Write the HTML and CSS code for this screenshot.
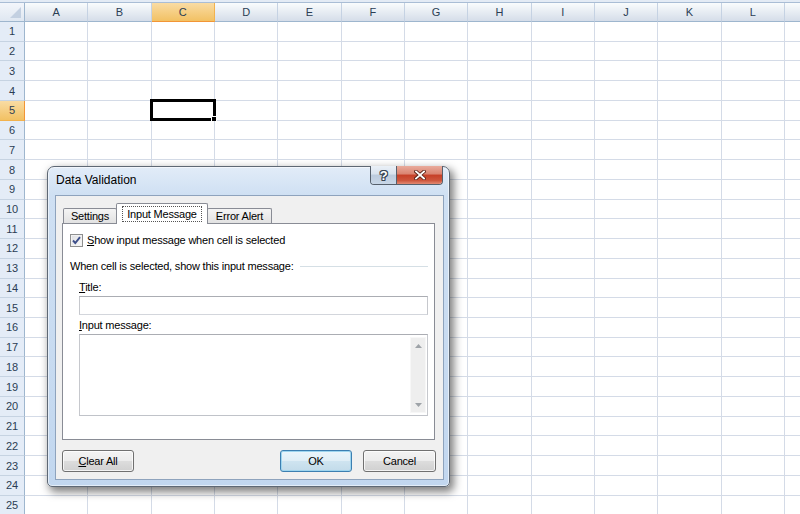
FILE: index.html
```html
<!DOCTYPE html>
<html>
<head>
<meta charset="utf-8">
<title>Data Validation</title>
<link rel="stylesheet" href="styles.css">
</head>
<body>
<div class="sheet">
  <div class="hdr">
    <div class="corner"><svg width="11" height="11" viewBox="0 0 11 11"><polygon points="11,0 11,11 0,11" fill="#c3d0e1"/></svg></div>
    <div class="ch">A</div><div class="ch">B</div><div class="ch sel">C</div><div class="ch">D</div><div class="ch">E</div><div class="ch">F</div><div class="ch">G</div><div class="ch">H</div><div class="ch">I</div><div class="ch">J</div><div class="ch">K</div><div class="ch">L</div><div class="ch"></div>
  </div>
  <div class="row"><div class="rh">1</div><div class="cells"></div></div>
  <div class="row"><div class="rh">2</div><div class="cells"></div></div>
  <div class="row"><div class="rh">3</div><div class="cells"></div></div>
  <div class="row"><div class="rh">4</div><div class="cells"></div></div>
  <div class="row"><div class="rh sel">5</div><div class="cells"><div class="cursor"><div class="handle"></div></div></div></div>
  <div class="row"><div class="rh">6</div><div class="cells"></div></div>
  <div class="row"><div class="rh">7</div><div class="cells"></div></div>
  <div class="row"><div class="rh">8</div><div class="cells"></div></div>
  <div class="row"><div class="rh">9</div><div class="cells"></div></div>
  <div class="row"><div class="rh">10</div><div class="cells"></div></div>
  <div class="row"><div class="rh">11</div><div class="cells"></div></div>
  <div class="row"><div class="rh">12</div><div class="cells"></div></div>
  <div class="row"><div class="rh">13</div><div class="cells"></div></div>
  <div class="row"><div class="rh">14</div><div class="cells"></div></div>
  <div class="row"><div class="rh">15</div><div class="cells"></div></div>
  <div class="row"><div class="rh">16</div><div class="cells"></div></div>
  <div class="row"><div class="rh">17</div><div class="cells"></div></div>
  <div class="row"><div class="rh">18</div><div class="cells"></div></div>
  <div class="row"><div class="rh">19</div><div class="cells"></div></div>
  <div class="row"><div class="rh">20</div><div class="cells"></div></div>
  <div class="row"><div class="rh">21</div><div class="cells"></div></div>
  <div class="row"><div class="rh">22</div><div class="cells"></div></div>
  <div class="row"><div class="rh">23</div><div class="cells"></div></div>
  <div class="row"><div class="rh">24</div><div class="cells"></div></div>
  <div class="row"><div class="rh">25</div><div class="cells"></div></div>
</div>

<div class="dlg">
  <div class="titlebar">
    <span class="title">Data Validation</span>
    <div class="caps">
      <div class="cap help"><span class="q">?</span></div>
      <div class="cap close">
        <svg width="12" height="10" viewBox="0 0 12 10"><path d="M2 1.5 L10 8.5 M10 1.5 L2 8.5" stroke="#5a2218" stroke-width="3.6" stroke-linecap="square" fill="none"/><path d="M2 1.5 L10 8.5 M10 1.5 L2 8.5" stroke="#ffffff" stroke-width="1.8" stroke-linecap="square" fill="none"/></svg>
      </div>
    </div>
  </div>
  <div class="client">
    <div class="tabs">
      <div class="tab t-settings">Settings</div>
      <div class="tab t-active"><span class="focus">Input Message</span></div>
      <div class="tab t-error">Error Alert</div>
    </div>
    <div class="panel">
      <div class="chk">
        <span class="box"><svg width="11" height="11" viewBox="0 0 11 11"><path d="M2 5.5 L4.3 8 L9 2.2" stroke="#3d4f8a" stroke-width="1.9" fill="none"/></svg></span>
        <span><u>S</u>how input message when cell is selected</span>
      </div>
      <div class="group"><span>When cell is selected, show this input message:</span><span class="rule"></span></div>
      <div class="flabel l-title"><u>T</u>itle:</div>
      <div class="input"></div>
      <div class="flabel l-msg"><u>I</u>nput message:</div>
      <div class="textarea">
        <div class="scroll">
          <div class="arrow"><svg width="7" height="4" viewBox="0 0 7 4"><polygon points="3.5,0 7,4 0,4" fill="#9ea3a8"/></svg></div>
          <div class="arrow"><svg width="7" height="4" viewBox="0 0 7 4"><polygon points="0,0 7,0 3.5,4" fill="#9ea3a8"/></svg></div>
        </div>
      </div>
    </div>
    <div class="buttons">
      <div class="btn b-clear"><u>C</u>lear All</div>
      <div class="btn b-ok">OK</div>
      <div class="btn b-cancel">Cancel</div>
    </div>
  </div>
</div>
</body>
</html>
```

FILE: styles.css
```css
* { box-sizing: border-box; }
html, body { margin: 0; padding: 0; }
body {
  width: 800px;
  height: 514px;
  overflow: hidden;
  background: #ffffff;
  font-family: "Liberation Sans", Arial, sans-serif;
  position: relative;
}

/* ---------- spreadsheet ---------- */
.sheet {
  border-top: 2px solid #e3ebf5;
}
.hdr {
  display: flex;
  height: 20px;
  border-top: 1px solid #a9bdd5;
}
.corner {
  flex: none;
  width: 25px;
  height: 100%;
  background: linear-gradient(#f3f6fb, #dfe7f1);
  border-right: 1px solid #9eb6ce;
  border-bottom: 1px solid #9eb6ce;
  display: flex;
  align-items: flex-end;
  justify-content: flex-end;
  padding: 0 3px 3px 0;
}
.corner svg { display: block; }
.ch {
  flex: none;
  width: 63.333px;
  height: 100%;
  background: linear-gradient(#f9fcfd, #d5dde9);
  border-right: 1px solid #c5d2e3;
  border-bottom: 1px solid #9eb6ce;
  display: flex;
  align-items: center;
  justify-content: center;
  font-size: 11px;
  color: #2b3d54;
}
.ch.sel {
  background: linear-gradient(#f9dca4, #f2c163);
  border-right-color: #f2b24e;
  border-bottom-color: #f29536;
}
.row {
  display: flex;
  height: 19.74px;
}
.rh {
  flex: none;
  width: 25px;
  background: #e4ecf7;
  border-right: 1px solid #9eb6ce;
  border-bottom: 1px solid #c6d3e2;
  display: flex;
  align-items: center;
  justify-content: center;
  font-size: 11px;
  color: #2b3d54;
}
.rh.sel {
  background: linear-gradient(#f9dca4, #f2c163);
  border-right-color: #f29536;
  border-bottom-color: #f2b24e;
}
.cells {
  flex: 1;
  position: relative;
  border-bottom: 1px solid #d4dbe7;
  background-image: repeating-linear-gradient(90deg, transparent 0, transparent 62.333px, #d4dbe7 62.333px, #d4dbe7 63.333px);
}
.cursor {
  position: absolute;
  left: 125px;
  top: -2px;
  width: 66px;
  height: 22px;
  border: 3px solid #000000;
}
.handle {
  position: absolute;
  right: -4px;
  bottom: -4px;
  width: 6px;
  height: 6px;
  background: #000000;
  border: 1px solid #ffffff;
}

/* ---------- dialog ---------- */
.dlg {
  position: absolute;
  left: 47px;
  top: 166px;
  width: 403px;
  height: 321px;
  border: 1px solid #5e6874;
  border-radius: 7px 7px 5px 5px;
  background: linear-gradient(180deg, #e2ecf8 0, #cfe0f3 28px, #c2d7ef 100%);
  box-shadow: 3px 4px 8px 1px rgba(0, 0, 0, 0.5), inset 0 0 0 1px rgba(255, 255, 255, 0.55);
  padding: 0 5px 6px 7px;
  display: flex;
  flex-direction: column;
  font-size: 11px;
  letter-spacing: -0.2px;
  color: #000000;
}
.titlebar {
  flex: none;
  height: 28px;
  display: flex;
  align-items: flex-start;
}
.title {
  font-size: 12px;
  letter-spacing: 0;
  line-height: 14px;
  padding-top: 6px;
  padding-left: 1px;
}
.caps {
  display: flex;
  margin: -1px 1px 0 auto;
  width: 73px;
  height: 19px;
  border: 1px solid #56606c;
  border-top: none;
  border-radius: 0 0 4px 4px;
  overflow: hidden;
}
.cap {
  height: 100%;
  display: flex;
  align-items: center;
  justify-content: center;
}
.help {
  flex: 0 0 26px;
  border-right: 1px solid #56606c;
  background: linear-gradient(#eaf0f7 0, #d9e3ee 45%, #bccbdd 50%, #c9d7e7 100%);
}
.q {
  font-weight: bold;
  font-size: 13px;
  line-height: 13px;
  color: #ffffff;
  text-shadow: 1px 0 0 #3a4654, -1px 0 0 #3a4654, 0 1px 0 #3a4654, 0 -1px 0 #3a4654, 1px 1px 0 #3a4654, -1px -1px 0 #3a4654, 1px -1px 0 #3a4654, -1px 1px 0 #3a4654;
}
.close {
  flex: 1;
  background: linear-gradient(#e9ab9c 0, #da8370 45%, #c63f27 50%, #cd553c 80%, #e28a74 100%);
}
.close svg { display: block; }

.client {
  flex: 1;
  background: #f0f0f0;
  border: 1px solid #8ea3bd;
  padding: 7px 8px 0 6px;
  display: flex;
  flex-direction: column;
}
.tabs {
  flex: none;
  display: flex;
  align-items: flex-end;
  height: 20px;
  padding-left: 1px;
  position: relative;
  z-index: 1;
}
.tab {
  flex: none;
  height: 15px;
  border: 1px solid #898c95;
  border-bottom: none;
  border-radius: 2px 2px 0 0;
  background: linear-gradient(#f4f4f4, #e2e2e2);
  display: flex;
  align-items: center;
  justify-content: center;
  line-height: 13px;
}
.t-settings { width: 54px; }
.t-active {
  width: 92px;
  height: 21px;
  margin-left: -1px;
  margin-bottom: -1px;
  background: #ffffff;
  align-items: flex-start;
  padding-top: 2px;
}
.t-error { width: 65px; margin-left: -1px; }
.focus {
  display: block;
  height: 16px;
  line-height: 14px;
  padding: 0 4px;
  border: 1px dotted #555555;
}
.panel {
  flex: none;
  height: 217px;
  border: 1px solid #898c95;
  background: #ffffff;
  padding: 10px 6px 0 7px;
  display: flex;
  flex-direction: column;
}
.chk {
  display: flex;
  align-items: center;
  gap: 4px;
  height: 13px;
  line-height: 13px;
}
.box {
  flex: none;
  width: 13px;
  height: 13px;
  border: 1px solid #8e8f8f;
  background: linear-gradient(135deg, #dcdde0, #fbfbfb);
  box-shadow: inset 0 0 0 1px #f2f2f2;
  display: flex;
  align-items: center;
  justify-content: center;
}
.box svg { display: block; }
.group {
  display: flex;
  align-items: center;
  height: 14px;
  margin-top: 12px;
  line-height: 14px;
}
.rule {
  flex: 1;
  height: 1px;
  margin-left: 6px;
  background: #d5dfe5;
}
.flabel {
  height: 14px;
  line-height: 14px;
  margin-left: 9px;
}
.l-title { margin-top: 7px; }
.l-msg { margin-top: 3px; }
.input {
  height: 19px;
  margin: 2px 0 0 9px;
  border: 1px solid #abadb3;
  border-left-color: #c6c8cd;
  border-right-color: #c6c8cd;
  border-bottom-color: #d3d6dc;
  background: #ffffff;
}
.textarea {
  height: 82px;
  margin: 2px 0 0 9px;
  border: 1px solid #abadb3;
  border-left-color: #c6c8cd;
  border-right-color: #c6c8cd;
  border-bottom-color: #c0c3c9;
  background: #ffffff;
  display: flex;
  justify-content: flex-end;
  padding: 2px 1px 2px 0;
}
.scroll {
  width: 16px;
  background: #eeeeee;
  border: 1px solid #f7f7f7;
  display: flex;
  flex-direction: column;
  justify-content: space-between;
}
.arrow {
  height: 15px;
  display: flex;
  align-items: center;
  justify-content: center;
}
.arrow svg { display: block; }
.buttons {
  flex: none;
  display: flex;
  height: 22px;
  margin-top: 10px;
}
.btn {
  flex: none;
  height: 22px;
  border: 1px solid #707070;
  border-radius: 3px;
  background: linear-gradient(#f3f3f3 0%, #ececec 48%, #dddddd 50%, #d0d0d0 100%);
  box-shadow: inset 0 0 0 1px rgba(255, 255, 255, 0.75);
  display: flex;
  align-items: center;
  justify-content: center;
  line-height: 14px;
}
.b-clear { width: 72px; }
.b-ok {
  width: 72px;
  margin-left: auto;
  border-color: #3c7fb1;
  background: linear-gradient(#eaf5fb 0%, #e0eef6 48%, #cfe4f0 50%, #c2dbea 100%);
  box-shadow: inset 0 0 0 1px #9ed5ef;
}
.b-cancel { width: 73px; margin-left: 11px; margin-right: -1px; }
```
